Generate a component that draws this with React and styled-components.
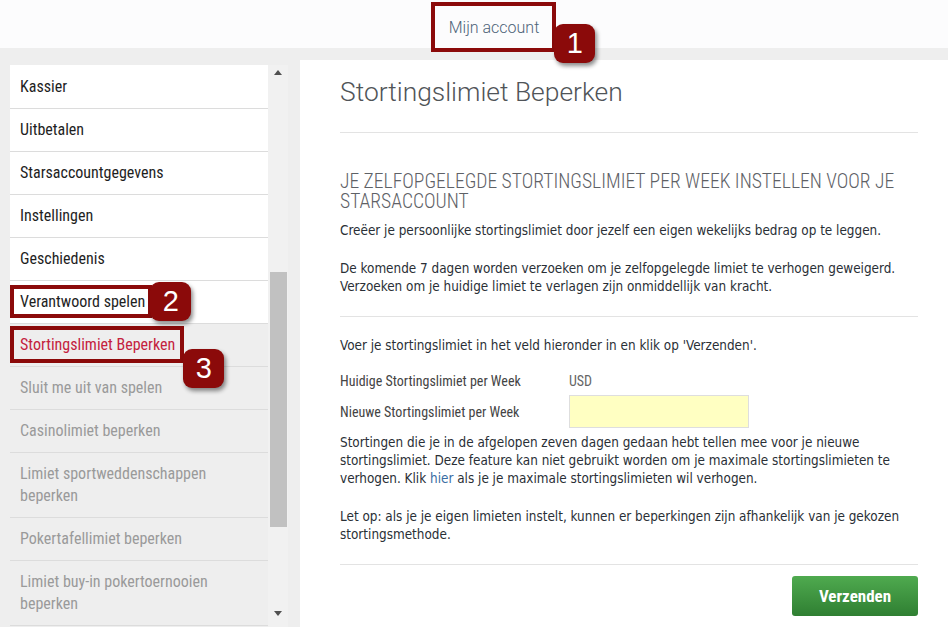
import React from "react";
import styled, { createGlobalStyle } from "styled-components";

const GlobalStyle = createGlobalStyle`
  html, body {
    margin: 0;
    padding: 0;
    background: #eeeeee;
    height: 100%;
    overflow: hidden;
  }
`;

const Page = styled.div`
  height: 100vh;
  display: flex;
  flex-direction: column;
  overflow: hidden;
`;

const TopBar = styled.div`
  height: 48px;
  flex-shrink: 0;
  background: #fcfcfd;
  display: flex;
  align-items: center;
  justify-content: center;
  padding-left: 40px;
`;

const TopLink = styled.span`
  display: inline-block;
  font-family: "Roboto", "Liberation Sans", sans-serif;
  font-weight: 300;
  font-size: 16px;
  color: #4d6378;
  padding-top: 6px;
`;

const Marked = styled.span`
  position: relative;
  display: inline-block;

  &::before {
    content: "";
    position: absolute;
    top: ${(p) => p.$box[0]}px;
    right: ${(p) => p.$box[1]}px;
    bottom: ${(p) => p.$box[2]}px;
    left: ${(p) => p.$box[3]}px;
    border: 4px solid #8b0a0a;
    pointer-events: none;
  }
`;

const Badge = styled.span`
  position: absolute;
  z-index: 2;
  left: calc(100% + ${(p) => p.$left}px);
  top: ${(p) => p.$top}px;
  width: 41px;
  height: 39px;
  border-radius: 9px;
  background: #8b0a0a;
  color: #fff;
  font-family: "Liberation Sans", Arial, sans-serif;
  font-size: 29px;
  line-height: 39px;
  text-align: center;
  box-shadow: 2px 3px 4px rgba(0, 0, 0, 0.45);
`;

const Main = styled.div`
  flex: 1;
  display: flex;
  gap: 12px;
  padding-top: 12px;
  min-height: 0;
`;

const Sidebar = styled.div`
  width: 278px;
  margin-left: 10px;
  padding-top: 5px;
  display: flex;
  min-height: 0;
`;

const MenuList = styled.ul`
  list-style: none;
  margin: 0;
  padding: 1px 0 0;
  width: 258px;
  overflow: hidden;
  background: #ffffff;
`;

const MenuItem = styled.li`
  padding: 10px;
  border-bottom: 1px solid #dcdcdc;
  background: ${(p) => (p.$sub ? "#eeeeee" : "#ffffff")};
  color: ${(p) => (p.$active ? "#c4213d" : p.$sub ? "#9a9a9a" : "#1e1e1e")};
  font-family: "Roboto Condensed", "Liberation Sans Narrow", "Roboto", sans-serif;
  font-size: 16px;
  line-height: 22px;
`;

const ScrollTrack = styled.div`
  position: relative;
  width: 20px;
  background: #f1f1f1;
`;

const ScrollThumb = styled.div`
  position: absolute;
  left: 2px;
  right: 1px;
  top: 207px;
  height: 255px;
  background: #c1c1c1;
`;

const Arrow = styled.div`
  position: absolute;
  left: 6px;
  width: 0;
  height: 0;
  border-left: 4px solid transparent;
  border-right: 4px solid transparent;
  ${(p) =>
    p.$down
      ? "top: 546px; border-top: 5px solid #505050;"
      : "top: 5px; border-bottom: 5px solid #505050;"}
`;

const Panel = styled.div`
  flex: 1;
  background: #ffffff;
  padding: 16px 30px 0 40px;
  font-family: "DejaVu Sans Condensed", "DejaVu Sans", sans-serif;
  font-size: 13.4px;
  line-height: 18px;
  color: #2a2f36;
`;

const Title = styled.h1`
  margin: 0;
  padding-bottom: 24px;
  border-bottom: 1px solid #e3e3e3;
  font-family: "Roboto", "Liberation Sans", sans-serif;
  font-weight: 300;
  font-size: 26.4px;
  line-height: 32px;
  color: #505458;
`;

const SectionTitle = styled.h2`
  margin: 39px 0 0;
  font-family: "Roboto Condensed", "Liberation Sans Narrow", "Roboto", sans-serif;
  font-weight: 300;
  font-size: 19.6px;
  line-height: 20px;
  color: #5e6166;
`;

const Text = styled.p`
  margin: ${(p) => p.$top ?? 20}px 0 0;
`;

const Divider = styled.hr`
  margin: ${(p) => p.$top ?? 20}px 0 0;
  border: 0;
  border-top: 1px solid #e3e3e3;
`;

const Link = styled.a`
  color: #3a6da3;
  text-decoration: none;
`;

const FieldRow = styled.div`
  display: flex;
  align-items: center;
  height: ${(p) => p.$h}px;
  margin-top: ${(p) => p.$top}px;
  font-family: "Roboto Condensed", "Liberation Sans Narrow", "Roboto", sans-serif;
  font-size: 14px;
  color: #444;
`;

const FieldLabel = styled.span`
  width: 229px;
`;

const FieldValue = styled.span`
  color: #666;
`;

const YellowInput = styled.input`
  width: 180px;
  height: 33px;
  box-sizing: border-box;
  background: #ffffc2;
  border: 1px solid #dedede;
  outline: none;
`;

const Actions = styled.div`
  display: flex;
  justify-content: flex-end;
  margin-top: 11px;
`;

const SubmitButton = styled.button`
  width: 126px;
  height: 40px;
  border: 0;
  border-radius: 3px;
  background: linear-gradient(#4faa4f, #2f7f32);
  color: #fff;
  font-family: "Roboto Condensed", "Liberation Sans Narrow", "Roboto", sans-serif;
  font-weight: 700;
  font-size: 17px;
  cursor: pointer;
`;

const menu = [
  { label: "Kassier" },
  { label: "Uitbetalen" },
  { label: "Starsaccountgegevens" },
  { label: "Instellingen" },
  { label: "Geschiedenis" },
  { label: "Verantwoord spelen", mark: 2 },
  { label: "Stortingslimiet Beperken", sub: true, active: true, mark: 3 },
  { label: "Sluit me uit van spelen", sub: true },
  { label: "Casinolimiet beperken", sub: true },
  { label: "Limiet sportweddenschappen beperken", sub: true },
  { label: "Pokertafellimiet beperken", sub: true },
  { label: "Limiet buy-in pokertoernooien beperken", sub: true },
  { label: "Tijdlimiet instellen", sub: true },
];

const marks = {
  2: { box: [-6, -7, -5, -10], left: 5, top: -9 },
  3: { box: [-8, -9, -7, -10], left: 8, top: 15 },
};

const App = () => {
  return (
    <Page>
      <GlobalStyle />
      <TopBar>
        <Marked $box={[-10, -17, -15, -18]}>
          <TopLink>Mijn account</TopLink>
          <Badge $left={15} $top={12}>1</Badge>
        </Marked>
      </TopBar>
      <Main>
        <Sidebar>
          <MenuList>
            {menu.map((item) => (
              <MenuItem key={item.label} $sub={item.sub} $active={item.active}>
                {item.mark ? (
                  <Marked $box={marks[item.mark].box}>
                    {item.label}
                    <Badge $left={marks[item.mark].left} $top={marks[item.mark].top}>
                      {item.mark}
                    </Badge>
                  </Marked>
                ) : (
                  item.label
                )}
              </MenuItem>
            ))}
          </MenuList>
          <ScrollTrack>
            <Arrow />
            <ScrollThumb />
            <Arrow $down />
          </ScrollTrack>
        </Sidebar>
        <Panel>
          <Title>Stortingslimiet Beperken</Title>
          <SectionTitle>
            JE ZELFOPGELEGDE STORTINGSLIMIET PER WEEK INSTELLEN VOOR JE STARSACCOUNT
          </SectionTitle>
          <Text $top={10}>
            Creëer je persoonlijke stortingslimiet door jezelf een eigen wekelijks bedrag op te leggen.
          </Text>
          <Text>
            De komende 7 dagen worden verzoeken om je zelfopgelegde limiet te verhogen geweigerd.
            Verzoeken om je huidige limiet te verlagen zijn onmiddellijk van kracht.
          </Text>
          <Divider />
          <Text>Voer je stortingslimiet in het veld hieronder in en klik op 'Verzenden'.</Text>
          <FieldRow $h={24} $top={14}>
            <FieldLabel>Huidige Stortingslimiet per Week</FieldLabel>
            <FieldValue>USD</FieldValue>
          </FieldRow>
          <FieldRow $h={33} $top={2}>
            <FieldLabel>Nieuwe Stortingslimiet per Week</FieldLabel>
            <YellowInput type="text" />
          </FieldRow>
          <Text $top={6}>
            Stortingen die je in de afgelopen zeven dagen gedaan hebt tellen mee voor je nieuwe
            stortingslimiet. Deze feature kan niet gebruikt worden om je maximale stortingslimieten te
            verhogen. Klik <Link href="#">hier</Link> als je je maximale stortingslimieten wil verhogen.
          </Text>
          <Text>
            Let op: als je je eigen limieten instelt, kunnen er beperkingen zijn afhankelijk van je gekozen
            stortingsmethode.
          </Text>
          <Divider />
          <Actions>
            <SubmitButton type="button">Verzenden</SubmitButton>
          </Actions>
        </Panel>
      </Main>
    </Page>
  );
};

export default App;
